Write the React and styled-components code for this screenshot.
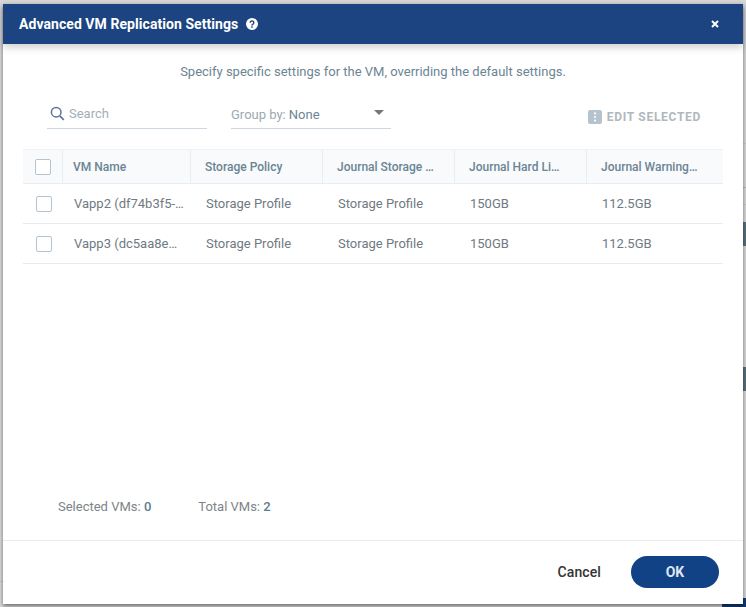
import React from "react";
import styled, { createGlobalStyle } from "styled-components";

const GlobalStyle = createGlobalStyle`
  html, body {
    margin: 0;
    padding: 0;
    height: 100%;
    overflow: hidden;
  }
  body {
    font-family: Roboto, "Liberation Sans", sans-serif;
  }
`;

const Backdrop = styled.div`
  position: relative;
  width: 746px;
  height: 607px;
  padding: 4px 3px 3px;
  box-sizing: border-box;
  background: #d8d8d8;
`;

const BackdropTile = styled.div`
  position: absolute;
  right: 0;
  top: ${(props) => props.top}px;
  width: 3px;
  height: 24px;
  background: #5a707c;
`;

const BackdropLine = styled.div`
  position: absolute;
  ${(props) => props.$side}: 0;
  top: ${(props) => props.top}px;
  width: 3px;
  height: 1px;
  background: ${(props) => props.color || "#cacaca"};
`;

const BackdropCorner = styled.div`
  position: absolute;
  right: 0;
  bottom: 0;
  width: 24px;
  height: 9px;
  background: #123a70;
`;

const Modal = styled.div`
  position: relative;
  display: flex;
  flex-direction: column;
  height: 600px;
  background: #fff;
  box-shadow: 0 2px 4px rgba(0, 0, 0, 0.5);
`;

const Header = styled.div`
  flex: none;
  display: flex;
  align-items: center;
  height: 40px;
  padding: 0 24px 0 16px;
  background: #1c4480;
  box-shadow: 0 3px 8px rgba(0, 0, 0, 0.2);
`;

const Title = styled.div`
  font-size: 14px;
  font-weight: 700;
  letter-spacing: 0.06px;
  color: #fff;
  margin-right: 8px;
`;

const Close = styled.svg`
  margin-left: auto;
  width: 8px;
  height: 8px;
`;

const Body = styled.div`
  flex: 1;
  display: flex;
  flex-direction: column;
  padding: 0 20px;
`;

const Intro = styled.div`
  margin-top: 19px;
  height: 17px;
  line-height: 17px;
  font-size: 13px;
  color: #6c8593;
  text-align: center;
`;

const Toolbar = styled.div`
  display: flex;
  align-items: flex-start;
  height: 53px;
  margin-top: 16px;
  padding-left: 24px;
`;

const SearchField = styled.div`
  display: flex;
  align-items: center;
  gap: 4px;
  width: 160px;
  height: 33px;
  padding-left: 3px;
  padding-top: 2px;
  box-sizing: border-box;
  border-bottom: 1px solid #ccd6e0;
  font-size: 13px;
  color: #9fafb9;
`;

const GroupField = styled.div`
  display: flex;
  align-items: center;
  width: 160px;
  height: 33px;
  margin-left: 24px;
  padding-top: 4px;
  box-sizing: border-box;
  border-bottom: 1px solid #ccd6e0;
  font-size: 13px;
  color: #9aa9b3;
`;

const GroupValue = styled.span`
  margin-left: 3px;
  color: #6c8593;
`;

const Caret = styled.div`
  margin-left: auto;
  margin-right: 7px;
  margin-bottom: 3px;
  border-left: 5px solid transparent;
  border-right: 5px solid transparent;
  border-top: 5px solid #777;
`;

const EditButton = styled.div`
  display: flex;
  align-items: center;
  gap: 5px;
  margin-left: auto;
  margin-right: 22px;
  height: 37px;
  padding-top: 4px;
  box-sizing: border-box;
  font-size: 12px;
  font-weight: 700;
  letter-spacing: 0.7px;
  color: #b0b8bd;
`;

const Table = styled.div`
  display: flex;
  flex-direction: column;
  width: 700px;
`;

const HeadRow = styled.div`
  display: grid;
  grid-template-columns: 40px 128px 132px 132px 132px 136px;
  height: 35px;
  box-sizing: border-box;
  background: #f8fafc;
  border-top: 1px solid #eef1f5;
  border-bottom: 1px solid #e8edf3;
`;

const HeadCell = styled.div`
  display: flex;
  align-items: center;
  padding-left: ${(props) => props.$pad || 14}px;
  border-right: ${(props) => (props.$last ? "none" : "1px solid #e8edf3")};
  font-size: 12px;
  font-weight: 500;
  color: #6a8494;
  white-space: nowrap;
  overflow: hidden;
`;

const Row = styled.div`
  display: grid;
  grid-template-columns: 40px 128px 132px 132px 132px 136px;
  height: 40px;
  box-sizing: border-box;
  border-bottom: 1px solid #e8ebf0;
`;

const Cell = styled.div`
  display: flex;
  align-items: center;
  padding-left: ${(props) => props.$pad || 15}px;
  font-size: 13px;
  color: #6f7a82;
  white-space: nowrap;
  overflow: hidden;
`;

const Check = styled.div`
  width: 16px;
  height: 16px;
  box-sizing: border-box;
  border: 1.5px solid #b4c3cd;
  border-radius: 2px;
  background: #fff;
`;

const Stats = styled.div`
  display: flex;
  gap: 47px;
  margin-top: auto;
  margin-bottom: 25px;
  padding-left: 35px;
  font-size: 13px;
  line-height: 17px;
  color: #7d8488;
`;

const StatValue = styled.span`
  font-weight: 500;
  color: #5c7d92;
`;

const Footer = styled.div`
  flex: none;
  display: flex;
  align-items: center;
  justify-content: flex-end;
  height: 64px;
  padding-right: 24px;
  padding-bottom: 2px;
  box-sizing: border-box;
  border-top: 1px solid #e8ebf0;
`;

const CancelButton = styled.div`
  margin-right: 30px;
  font-size: 14px;
  font-weight: 500;
  letter-spacing: 0.1px;
  color: #333;
`;

const OkButton = styled.div`
  display: flex;
  align-items: center;
  justify-content: center;
  width: 88px;
  height: 32px;
  border-radius: 16px;
  background: #124286;
  font-size: 14px;
  font-weight: 700;
  color: #dfe7f1;
`;

const columns = ["VM Name", "Storage Policy", "Journal Storage …", "Journal Hard Li…", "Journal Warning…"];

const rows = [
  ["Vapp2 (df74b3f5-…", "Storage Profile", "Storage Profile", "150GB", "112.5GB"],
  ["Vapp3 (dc5aa8e…", "Storage Profile", "Storage Profile", "150GB", "112.5GB"],
];

const App = () => (
  <>
    <GlobalStyle />
    <Backdrop>
      <BackdropTile top={222} />
      <BackdropTile top={367} />
      <BackdropLine $side="right" top={143} />
      <BackdropLine $side="right" top={187} color="#b8b8b8" />
      <BackdropLine $side="right" top={204} />
      <BackdropLine $side="left" top={581} color="#c4c4c4" />
      <BackdropCorner />
      <Modal>
        <Header>
          <Title>Advanced VM Replication Settings</Title>
          <svg width="12" height="12" viewBox="0 0 12 12">
            <circle cx="6" cy="6" r="6" fill="#fff" />
            <path d="M4.2 4.7a1.8 1.8 0 1 1 2.8 1.5c-.7.4-1 .7-1 1.3" fill="none" stroke="#1c4480" strokeWidth="1.4" />
            <rect x="5.2" y="8.3" width="1.5" height="1.5" fill="#1c4480" />
          </svg>
          <Close viewBox="0 0 8 8">
            <path d="M1 1l6 6M7 1l-6 6" stroke="#fff" strokeWidth="2" />
          </Close>
        </Header>
        <Body>
          <Intro>Specify specific settings for the VM, overriding the default settings.</Intro>
          <Toolbar>
            <SearchField>
              <svg width="15" height="15" viewBox="0 0 15 15">
                <circle cx="6.2" cy="6.2" r="4.8" fill="none" stroke="#5f7399" strokeWidth="1.5" />
                <path d="M9.8 9.8l4 4" stroke="#5f7399" strokeWidth="1.7" />
              </svg>
              Search
            </SearchField>
            <GroupField>
              Group by:<GroupValue>None</GroupValue>
              <Caret />
            </GroupField>
            <EditButton>
              <svg width="14" height="14" viewBox="0 0 14 14">
                <rect width="14" height="14" rx="2" fill="#b4c3cd" />
                <circle cx="7" cy="3.4" r="1.1" fill="#fff" />
                <circle cx="7" cy="7" r="1.1" fill="#fff" />
                <circle cx="7" cy="10.6" r="1.1" fill="#fff" />
              </svg>
              EDIT SELECTED
            </EditButton>
          </Toolbar>
          <Table>
            <HeadRow>
              <HeadCell $pad={12}>
                <Check />
              </HeadCell>
              {columns.map((col, index) => (
                <HeadCell key={col} $pad={index === 0 ? 10 : 14} $last={index === columns.length - 1}>
                  {col}
                </HeadCell>
              ))}
            </HeadRow>
            {rows.map((row, i) => (
              <Row key={i}>
                <Cell $pad={13}>
                  <Check />
                </Cell>
                {row.map((value, j) => (
                  <Cell key={j} $pad={j === 0 ? 11 : 15}>
                    {value}
                  </Cell>
                ))}
              </Row>
            ))}
          </Table>
          <Stats>
            <span>
              Selected VMs: <StatValue>0</StatValue>
            </span>
            <span>
              Total VMs: <StatValue>2</StatValue>
            </span>
          </Stats>
        </Body>
        <Footer>
          <CancelButton>Cancel</CancelButton>
          <OkButton>OK</OkButton>
        </Footer>
      </Modal>
    </Backdrop>
  </>
);

export default App;
